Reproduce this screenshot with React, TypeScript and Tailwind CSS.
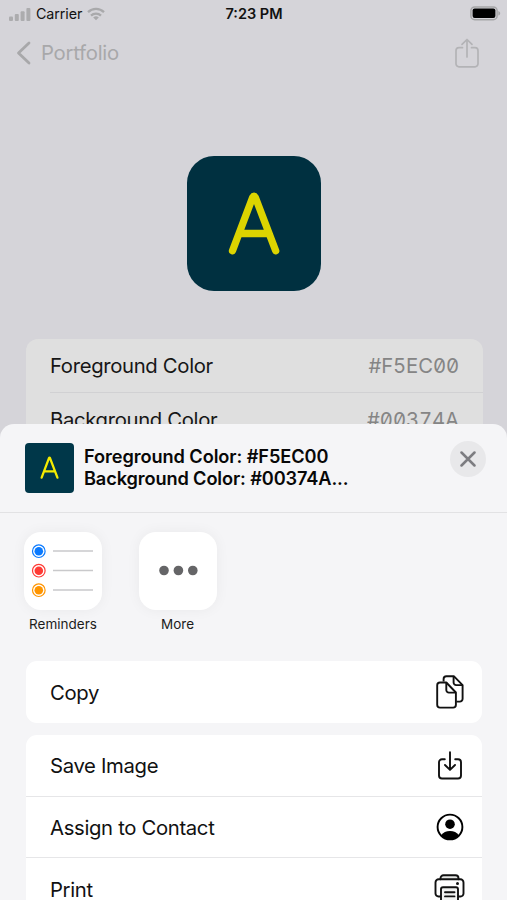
import React from 'react';

interface ColorRow {
    label: string;
    value: string;
}

interface Action {
    label: string;
    icon: React.ReactNode;
}

const colors: ColorRow[] = [
    { label: 'Foreground Color', value: '#F5EC00' },
    { label: 'Background Color', value: '#00374A' },
];

const SignalIcon = () => (
    <svg width="22" height="13" viewBox="0 0 22 13" fill="#acacae">
        <rect x="0" y="8.5" width="4" height="4.5" rx="1" />
        <rect x="5.8" y="6" width="4" height="7" rx="1" />
        <rect x="11.6" y="3.2" width="4" height="9.8" rx="1" />
        <rect x="17.4" y="0" width="4" height="13" rx="1" />
    </svg>
);

const WifiIcon = () => (
    <svg width="18" height="14" viewBox="0 0 18 14" fill="none" stroke="#a9a9ab" strokeWidth="2.3">
        <path d="M1 5.2a11.5 11.5 0 0 1 16 0" />
        <path d="M4 8.6a7.2 7.2 0 0 1 10 0" />
        <path d="M9 13.2 6.2 10.4a4.2 4.2 0 0 1 5.6 0Z" fill="#a9a9ab" stroke="none" />
    </svg>
);

const BatteryIcon = () => (
    <svg width="31" height="15" viewBox="0 0 31 15" fill="none">
        <rect x="0.9" y="0.9" width="26.2" height="12.8" rx="3.8" stroke="#a5a5a7" strokeWidth="1.5" />
        <rect x="2.6" y="2.5" width="22.8" height="9.6" rx="2" fill="#000" />
        <path d="M28.3 5c1.2.4 1.9 1.3 1.9 2.3s-.7 1.9-1.9 2.3Z" fill="#a5a5a7" />
    </svg>
);

const ShareIcon = () => (
    <svg width="26" height="31" viewBox="0 0 26 31" fill="none" stroke="#b3b3b6" strokeWidth="1.7" strokeLinecap="round" strokeLinejoin="round">
        <path d="M8.5 9.7H5a3 3 0 0 0-3 3v13.1a3 3 0 0 0 3 3h16a3 3 0 0 0 3-3V12.7a3 3 0 0 0-3-3h-3.5" />
        <path d="M13 19V1.7M8 6.4l5-4.9 5 4.9" />
    </svg>
);

const LetterMark = ({ size, color, weight }: { size: number; color: string; weight: number }) => (
    <svg width={size} height={size} viewBox="0 0 134 134" fill="none" stroke={color} strokeWidth={weight} strokeLinecap="round" strokeLinejoin="round">
        <path d="M45.5 94.8 65.6 41.5Q67 39 68.4 41.5L88.7 94.8M54 77.5h26.5" />
    </svg>
);

const CopyIcon = () => (
    <svg width="28" height="34" viewBox="0 0 28 34" fill="none" stroke="#111" strokeWidth="1.9" strokeLinejoin="round">
        <path d="M7.6 6.5V4a2.8 2.8 0 0 1 2.8-2.8h7.4l8.8 8.9v13.7a2.8 2.8 0 0 1-2.8 2.8h-3.4" />
        <path d="M17.6 1.2v6.3a2.6 2.6 0 0 0 2.6 2.6h6.4" />
        <path d="M4 7.5h6.3l9.6 10v12.3a2.8 2.8 0 0 1-2.8 2.8H4a2.8 2.8 0 0 1-2.8-2.8V10.3A2.8 2.8 0 0 1 4 7.5Z" />
        <path d="M10.3 7.5V15a2.6 2.6 0 0 0 2.6 2.6h7" />
    </svg>
);

const SaveIcon = () => (
    <svg width="26" height="29" viewBox="0 0 26 29" fill="none" stroke="#111" strokeWidth="1.9" strokeLinecap="round" strokeLinejoin="round">
        <path d="M7.8 8.2H5a3 3 0 0 0-3 3v13.3a3 3 0 0 0 3 3h16a3 3 0 0 0 3-3V11.2a3 3 0 0 0-3-3h-2.8" />
        <path d="M13 1.2V18.5M8 14l5 4.9 5-4.9" />
    </svg>
);

const ContactIcon = () => (
    <svg width="28" height="28" viewBox="0 0 28 28" fill="none">
        <circle cx="14" cy="14" r="12.4" stroke="#000" strokeWidth="1.9" />
        <circle cx="14" cy="11.2" r="4.8" fill="#000" />
        <path d="M5 22.5c2-3.2 5.3-4.5 9-4.5s7 1.3 9 4.5a12.5 12.5 0 0 1-18 0Z" fill="#000" />
    </svg>
);

const PrintIcon = () => (
    <svg width="31" height="30" viewBox="0 0 31 30" fill="none" stroke="#111" strokeWidth="1.9" strokeLinejoin="round" strokeLinecap="round">
        <path d="M6.5 5.2V4.3a3 3 0 0 1 3-3h12a3 3 0 0 1 3 3v.9" fill="#e4e6e4" />
        <path d="M6.8 22.5H4.5a3 3 0 0 1-3-3V8.4a3.2 3.2 0 0 1 3.2-3.2h21.6a3.2 3.2 0 0 1 3.2 3.2v11.1a3 3 0 0 1-3 3h-2.3" />
        <path d="M7 28.5V15.3a2 2 0 0 1 2-2h13a2 2 0 0 1 2 2v13.2Z" fill="#f1f2f1" />
        <path d="M11 18.2h9.5M11 22.4h9.5" />
        <circle cx="23.5" cy="9.6" r="1.5" fill="#111" stroke="none" />
    </svg>
);

const RemindersIcon = () => (
    <svg width="78" height="78" viewBox="0 0 78 78">
        {['#0a7aff', '#ff3b35', '#ff9500'].map((c, i) => (
            <g key={c}>
                <circle cx="14.8" cy={19.2 + i * 19.5} r="6.3" fill="none" stroke={c} strokeWidth="1.2" />
                <circle cx="14.8" cy={19.2 + i * 19.5} r="4.3" fill={c} />
                <path d={`M29 ${19 + i * 19.5}h40`} stroke="#c9c9cb" strokeWidth="1.4" />
            </g>
        ))}
    </svg>
);

const MoreIcon = () => (
    <svg width="78" height="78" viewBox="0 0 78 78" fill="#656567">
        <circle cx="25" cy="38.5" r="4.8" />
        <circle cx="39.4" cy="38.5" r="4.8" />
        <circle cx="53.8" cy="38.5" r="4.8" />
    </svg>
);

const actions: Action[] = [
    { label: 'Save Image', icon: <SaveIcon /> },
    { label: 'Assign to Contact', icon: <ContactIcon /> },
    { label: 'Print', icon: <PrintIcon /> },
];

const ActionRow = ({ label, icon }: Action) => (
    <div className="flex h-[61.5px] shrink-0 items-center justify-between pl-6 text-[20.3px] text-[#111]">
        <span className="pt-[2px] tracking-[-0.33px]">{label}</span>
        <span className="flex w-[65px] justify-center pt-px">{icon}</span>
    </div>
);

const App: React.FC = () => {
    return (
        <div className="flex h-[900px] w-[507px] flex-col overflow-hidden bg-[#d5d4d9] font-['Inter',sans-serif]">
            {/* Dimmed page behind the sheet */}
            <div className="h-[424px] shrink-0 overflow-hidden">
                <div className="grid h-7 grid-cols-3 items-center pl-[9px] pr-[6px] text-[#111]">
                    <div className="flex items-center gap-[5px]">
                        <SignalIcon />
                        <span className="text-[14.3px] tracking-[-0.1px]">Carrier</span>
                        <WifiIcon />
                    </div>
                    <span className="-ml-[2px] text-center text-[14.5px] font-semibold">7:23 PM</span>
                    <div className="flex justify-end pb-px"><BatteryIcon /></div>
                </div>

                <div className="flex h-[50px] items-center justify-between pl-4 pr-[27px]">
                    <div className="flex items-center gap-[10px] text-[#a8a8aa]">
                        <svg width="15" height="24" viewBox="0 0 15 24" fill="none" stroke="currentColor" strokeWidth="2.8" strokeLinecap="round" strokeLinejoin="round">
                            <path d="M13 2 2.5 12 13 22" />
                        </svg>
                        <span className="text-[20.3px] tracking-[-0.25px]">Portfolio</span>
                    </div>
                    <ShareIcon />
                </div>

                <div className="ml-[187px] mt-[78px] h-[135px] w-[134px] rounded-[27px] bg-[#003040]">
                    <LetterMark size={134} color="#dcd400" weight={7.3} />
                </div>

                <div className="mt-[48px] ml-[26px] w-[457px] rounded-t-xl bg-[#dfdfdf] pl-6">
                    {colors.map(({ label, value }) => (
                        <div key={label} className="flex h-[54px] items-center justify-between border-b border-[#d1d1d3] pr-6 text-[20.3px]">
                            <span className="pt-[2px] tracking-[-0.33px] text-[#161616]">{label}</span>
                            <span className="pt-[2px] tracking-[-0.1px] text-[#858585] [font-feature-settings:'tnum','zero']">{value}</span>
                        </div>
                    ))}
                </div>
            </div>

            {/* Share sheet */}
            <div className="flex min-h-0 flex-1 flex-col overflow-hidden rounded-t-[14px] bg-[#f5f5f7]">
                <div className="flex h-[89px] shrink-0 items-start border-b border-[#e2e2e4] pl-[25px] pr-[21px]">
                    <div className="mt-[19px] h-[50px] w-[49px] rounded-[4px] bg-[#003749]">
                        <LetterMark size={49} color="#f5ec00" weight={6.3} />
                    </div>
                    <div className="mt-[21px] ml-[10px] flex-1 text-[18.2px] leading-[22px] font-semibold text-[#080808]">
                        <p className="tracking-[-0.08px]">Foreground Color: #F5EC00</p>
                        <p className="tracking-[-0.12px]">Background Color: #00374A...</p>
                    </div>
                    <div className="mt-[17px] flex size-9 items-center justify-center rounded-full bg-[#e8e8ea]">
                        <svg width="16" height="16" viewBox="0 0 16 16" stroke="#7d7d81" strokeWidth="2.5" strokeLinecap="round">
                            <path d="m1.5 1.5 13 13M14.5 1.5l-13 13" />
                        </svg>
                    </div>
                </div>

                <div className="flex h-[148px] shrink-0 gap-9 pt-[19px] pl-6 text-[13.5px] text-[#1c1c1c]">
                    <div className="flex w-[78px] flex-col items-center">
                        <div className="size-[78px] rounded-[17px] bg-white shadow-[0_0_14px_rgba(0,0,0,0.05)]"><RemindersIcon /></div>
                        <span className="mt-1 leading-5">Reminders</span>
                    </div>
                    <div className="flex w-[79px] flex-col items-center">
                        <div className="size-[78px] rounded-[17px] bg-white shadow-[0_0_14px_rgba(0,0,0,0.05)]"><MoreIcon /></div>
                        <span className="mt-1 leading-5">More</span>
                    </div>
                </div>

                <div className="mx-[26px] w-[456px] shrink-0 rounded-[11px] bg-white">
                    <ActionRow label="Copy" icon={<CopyIcon />} />
                </div>

                <div className="mx-[26px] mt-[12.5px] w-[456px] divide-y divide-[#e6e6e8] rounded-t-[11px] bg-white">
                    {actions.map((a) => (
                        <ActionRow key={a.label} {...a} />
                    ))}
                </div>
            </div>
        </div>
    );
};

export default App;
